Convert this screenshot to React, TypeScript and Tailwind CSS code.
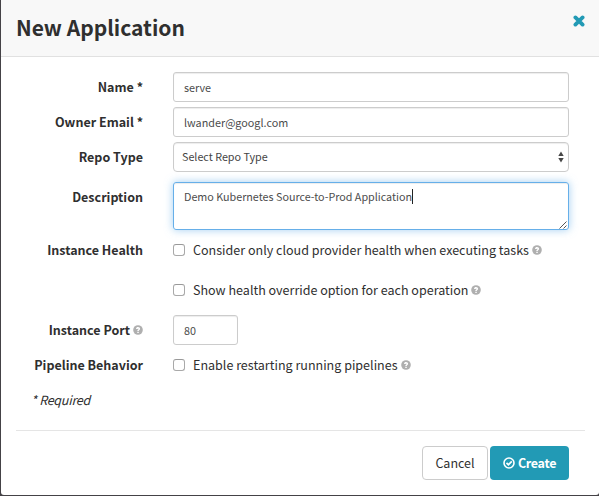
import type { ReactNode } from "react";

function Help() {
  return (
    <svg className="block h-[10px] w-[10px] shrink-0" viewBox="0 0 20 20">
      <circle cx="10" cy="10" r="9.6" fill="#afafaf" />
      <path d="M6 8.2C6 5.4 7.8 4.1 10.1 4.1C12.4 4.1 14.2 5.5 14.2 7.7C14.2 10.2 11.5 10.2 11.5 12.2H8.6C8.6 9.3 11 9.3 11 7.8C11 6.4 9.1 6.4 9.1 8.2Z" fill="#fff" />
      <path d="M8.6 13.3H11.5V16H8.6Z" fill="#fff" />
    </svg>
  );
}

function Label({ children }: { children: ReactNode }) {
  return (
    <div className="flex h-5 w-[142px] shrink-0 items-center justify-end gap-[3px] text-[12.5px] font-bold leading-5 text-[#2f2f2f]">
      {children}
    </div>
  );
}

function Check({ text }: { text: string }) {
  return (
    <div className="ml-[30px] flex h-5 items-center">
      <span className="block h-3 w-3 shrink-0 rounded-[3px] border border-[#a9a9a9] border-t-[#999] bg-white" />
      <span className="ml-2 mr-[3px] text-[12.54px] leading-5 text-[#2f2f2f]">{text}</span>
      <Help />
    </div>
  );
}

const field =
  "ml-[30px] flex h-[30px] items-center rounded-[3px] border border-[#ccc] bg-white px-[10px] text-[10.8px] leading-4 text-[#4c4c4c] shadow-[inset_0_1px_1px_rgba(0,0,0,0.075)]";

export default function App() {
  return (
    <div className="h-[496px] w-[599px] overflow-hidden bg-[#444246] pl-px font-['Noto_Sans_CJK_SC','Noto_Sans',sans-serif] whitespace-nowrap text-[#2f2f2f]">
      <div className="flex h-[495px] flex-col rounded-b-[3px] bg-white">
        <header className="flex h-[57px] shrink-0 items-start justify-between border-b border-[#e1e1e1] bg-[#f8f8f8] pl-[15px] pr-[14px]">
          <h1 className="mt-[13px] text-[21px] font-bold leading-[28px]">New Application</h1>
          <svg className="mt-[15px] block h-3 w-3" viewBox="0 0 12 12">
            <path d="M2.4 2.4L9.6 9.6M9.6 2.4L2.4 9.6" stroke="#229ab5" strokeWidth="3.8" strokeLinecap="round" />
          </svg>
        </header>

        <div className="flex h-[373px] shrink-0 flex-col pt-[15px]">
          <div className="flex items-center">
            <Label>Name *</Label>
            <div className={`${field} w-[396px]`}>serve</div>
          </div>
          <div className="mt-[5px] flex items-center">
            <Label>Owner Email *</Label>
            <div className={`${field} w-[396px]`}>lwander@googl.com</div>
          </div>
          <div className="mt-[5px] flex items-center">
            <Label>Repo Type</Label>
            <div className="ml-[30px] flex h-[30px] w-[396px] items-center justify-between rounded-[4px] border border-[#ccc] pl-2 pr-1 text-[10.75px] leading-4 text-[#444] shadow-[inset_0_1px_1px_rgba(0,0,0,0.075)]">
              <span>Select Repo Type</span>
              <svg className="block h-3 w-[6px]" viewBox="0 0 6 12">
                <path d="M3 .5L5.7 5H.3ZM3 11.5L.3 7H5.7Z" fill="#484848" />
              </svg>
            </div>
          </div>
          <div className="mt-[10px] flex items-start">
            <div className="mt-[5px]"><Label>Description</Label></div>
            <div className="ml-[30px] flex h-12 w-[396px] items-start rounded-[3px] border border-[#66afe9] pl-[10px] pt-[6px] text-[10.75px] leading-4 text-[#4c4c4c] shadow-[inset_0_1px_1px_rgba(0,0,0,0.075),0_0_8px_rgba(102,175,233,0.6)]">
              <span>Demo Kubernetes Source-to-Prod Application</span>
              <span className="block h-[15px] w-px bg-[#222]" />
              <svg className="ml-auto mr-px mt-[32px] block h-2 w-2" viewBox="0 0 8 8">
                <path d="M.5 7.5L7.5 .5M4.5 7.5L7.5 4.5" stroke="#555" strokeWidth="1" />
              </svg>
            </div>
          </div>
          <div className="mt-[10px] flex">
            <Label>Instance Health</Label>
            <Check text="Consider only cloud provider health when executing tasks" />
          </div>
          <div className="mt-5 flex pl-[142px]">
            <Check text="Show health override option for each operation" />
          </div>
          <div className="mt-[15px] flex items-center">
            <Label><span>Instance Port</span><Help /></Label>
            <div className={`${field} w-[65px]`}>80</div>
          </div>
          <div className="mt-[10px] flex">
            <Label>Pipeline Behavior</Label>
            <Check text="Enable restarting running pipelines" />
          </div>
          <div className="ml-[30px] mt-[15px] text-[12.5px] italic leading-5 tracking-[-0.25px]">* Required</div>
        </div>

        <footer className="ml-[15px] mr-[14px] flex justify-end border-t border-[#e5e5e5] pr-[15px] pt-[15px]">
          <button className="mr-[2px] flex h-[34px] w-[66px] items-center justify-center rounded-[4px] border border-[#ccc] bg-white text-[12.5px] leading-5">Cancel</button>
          <button className="mr-px flex h-[34px] w-[79px] items-center justify-center gap-[3px] rounded-[4px] bg-[#229ab5] text-[12.5px] font-bold leading-5 tracking-[-0.3px] text-white">
            <svg className="block h-3 w-3" viewBox="0 0 12 12" fill="none" stroke="#fff">
              <circle cx="6" cy="6" r="5" strokeWidth="1.6" />
              <path d="M3.5 5.8L5.4 7.7L8.8 4.3" strokeWidth="1.7" />
            </svg>
            <span>Create</span>
          </button>
        </footer>
      </div>
    </div>
  );
}
